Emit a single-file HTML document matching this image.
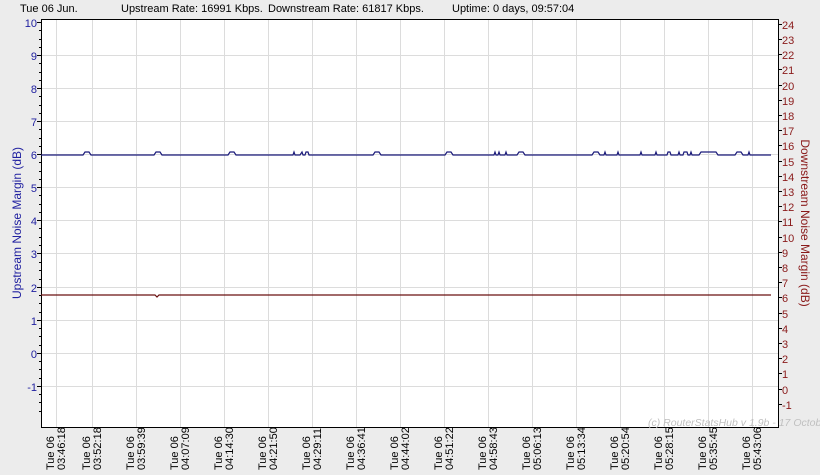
<!DOCTYPE html><html><head><style>body{margin:0;background:#ececec;}svg{display:block}text{font-family:"Liberation Sans",sans-serif;}</style></head><body>
<svg width="820" height="475" xmlns="http://www.w3.org/2000/svg">
<rect width="820" height="475" fill="#ececec"/>
<g font-size="11" fill="#000">
<text x="20" y="12">Tue 06 Jun.</text>
<text x="121" y="12">Upstream Rate: 16991 Kbps.</text>
<text x="268" y="12">Downstream Rate: 61817 Kbps.</text>
<text x="452" y="12">Uptime: 0 days, 09:57:04</text>
</g>
<rect x="41" y="19" width="737" height="408" fill="#fff"/>
<g stroke="#dcdcdc" stroke-width="1">
<path d="M56.5 19V427M92.5 19V427M136.5 19V427M180.5 19V427M224.5 19V427M268.5 19V427M312.5 19V427M356.5 19V427M400.5 19V427M444.5 19V427M488.5 19V427M532.5 19V427M576.5 19V427M620.5 19V427M664.5 19V427M708.5 19V427M752.5 19V427"/>
<path d="M41 55.5H778M41 88.5H778M41 121.5H778M41 154.5H778M41 187.5H778M41 220.5H778M41 253.5H778M41 287.5H778M41 320.5H778M41 353.5H778M41 386.5H778"/>
</g>
<path d="M41.5 19V427.5H778.5V19.5H41" fill="none" stroke="#000" stroke-width="1"/>
<g stroke="#000">
<path d="M37 22.5H41M37 55.5H41M37 88.5H41M37 121.5H41M37 154.5H41M37 187.5H41M37 220.5H41M37 253.5H41M37 287.5H41M37 320.5H41M37 353.5H41M37 386.5H41"/>
<path d="M39 30.5H41M39 39.5H41M39 47.5H41M39 63.5H41M39 72.5H41M39 80.5H41M39 96.5H41M39 105.5H41M39 113.5H41M39 129.5H41M39 138.5H41M39 146.5H41M39 162.5H41M39 171.5H41M39 179.5H41M39 195.5H41M39 204.5H41M39 212.5H41M39 228.5H41M39 237.5H41M39 245.5H41M39 262.5H41M39 270.5H41M39 279.5H41M39 295.5H41M39 303.5H41M39 312.5H41M39 328.5H41M39 336.5H41M39 345.5H41M39 361.5H41M39 369.5H41M39 378.5H41M39 394.5H41M39 402.5H41M39 411.5H41"/>
<path d="M778 24.5H782M778 39.5H782M778 54.5H782M778 69.5H782M778 85.5H782M778 100.5H782M778 115.5H782M778 130.5H782M778 145.5H782M778 161.5H782M778 176.5H782M778 191.5H782M778 206.5H782M778 221.5H782M778 237.5H782M778 252.5H782M778 267.5H782M778 282.5H782M778 297.5H782M778 313.5H782M778 328.5H782M778 343.5H782M778 358.5H782M778 373.5H782M778 389.5H782M778 404.5H782"/>
</g>
<g font-size="11" fill="#2020a0" text-anchor="end">
<text x="37" y="27">10</text><text x="37" y="60">9</text><text x="37" y="93">8</text><text x="37" y="126">7</text><text x="37" y="159">6</text><text x="37" y="192">5</text><text x="37" y="225">4</text><text x="37" y="258">3</text><text x="37" y="292">2</text><text x="37" y="325">1</text><text x="37" y="358">0</text><text x="37" y="391">-1</text>
</g>
<g font-size="11" fill="#8a1a1a">
<text x="782" y="29">24</text><text x="782" y="44">23</text><text x="782" y="59">22</text><text x="782" y="74">21</text><text x="782" y="90">20</text><text x="782" y="105">19</text><text x="782" y="120">18</text><text x="782" y="135">17</text><text x="782" y="150">16</text><text x="782" y="166">15</text><text x="782" y="181">14</text><text x="782" y="196">13</text><text x="782" y="211">12</text><text x="782" y="226">11</text><text x="782" y="242">10</text><text x="782" y="257">9</text><text x="782" y="272">8</text><text x="782" y="287">7</text><text x="782" y="302">6</text><text x="782" y="318">5</text><text x="782" y="333">4</text><text x="782" y="348">3</text><text x="782" y="363">2</text><text x="782" y="378">1</text><text x="782" y="394">0</text><text x="782" y="409">-1</text>
</g>
<text transform="translate(21,223) rotate(-90)" font-size="12" fill="#2020a0" text-anchor="middle">Upstream Noise Margin (dB)</text>
<text transform="translate(801,223) rotate(90)" font-size="12" fill="#8a1a1a" text-anchor="middle">Downstream Noise Margin (dB)</text>
<text x="648" y="426" font-size="10.5" font-style="italic" fill="#c0c0c0">(c) RouterStatsHub v 1.9b - 17 October 2</text>
<path d="M41 155H83L85 152H89L91 155H154L156 152H160L162 155H228L230 152H234L236 155H293L294 152L295 155H300L302 152L303 155H305L306 152H308L309 155H373L375 152H379L381 155H445L447 152H451L453 155H494L495 152L496 155H498L499 152L500 155H505L506 152L507 155H517L519 152H523L525 155H592L594 152H598L600 155H604L605 152L606 155H617L618 152L619 155H640L641 152L642 155H655L656 152L657 155H667L668 152H670L671 155H678L679 152L680 155H683L684 152H687L688 155H690L691 152L692 155H699L701 152H716L718 155H735L737 152H741L743 155H748L749 152L750 155H771" fill="none" stroke="#1a1a7a" stroke-width="1.2"/>
<path d="M41 295H155L157 297L159 295H771" fill="none" stroke="#6a1010" stroke-width="1.2"/>
<g font-size="11" fill="#000">
<g transform="translate(55,432) rotate(-90)"><text x="-38" y="-1">Tue 06</text><text x="-38" y="10">03:46:18</text></g>
<g transform="translate(91,432) rotate(-90)"><text x="-38" y="-1">Tue 06</text><text x="-38" y="10">03:52:18</text></g>
<g transform="translate(135,432) rotate(-90)"><text x="-38" y="-1">Tue 06</text><text x="-38" y="10">03:59:39</text></g>
<g transform="translate(179,432) rotate(-90)"><text x="-38" y="-1">Tue 06</text><text x="-38" y="10">04:07:09</text></g>
<g transform="translate(223,432) rotate(-90)"><text x="-38" y="-1">Tue 06</text><text x="-38" y="10">04:14:30</text></g>
<g transform="translate(267,432) rotate(-90)"><text x="-38" y="-1">Tue 06</text><text x="-38" y="10">04:21:50</text></g>
<g transform="translate(311,432) rotate(-90)"><text x="-38" y="-1">Tue 06</text><text x="-38" y="10">04:29:11</text></g>
<g transform="translate(355,432) rotate(-90)"><text x="-38" y="-1">Tue 06</text><text x="-38" y="10">04:36:41</text></g>
<g transform="translate(399,432) rotate(-90)"><text x="-38" y="-1">Tue 06</text><text x="-38" y="10">04:44:02</text></g>
<g transform="translate(443,432) rotate(-90)"><text x="-38" y="-1">Tue 06</text><text x="-38" y="10">04:51:22</text></g>
<g transform="translate(487,432) rotate(-90)"><text x="-38" y="-1">Tue 06</text><text x="-38" y="10">04:58:43</text></g>
<g transform="translate(531,432) rotate(-90)"><text x="-38" y="-1">Tue 06</text><text x="-38" y="10">05:06:13</text></g>
<g transform="translate(575,432) rotate(-90)"><text x="-38" y="-1">Tue 06</text><text x="-38" y="10">05:13:34</text></g>
<g transform="translate(619,432) rotate(-90)"><text x="-38" y="-1">Tue 06</text><text x="-38" y="10">05:20:54</text></g>
<g transform="translate(663,432) rotate(-90)"><text x="-38" y="-1">Tue 06</text><text x="-38" y="10">05:28:15</text></g>
<g transform="translate(707,432) rotate(-90)"><text x="-38" y="-1">Tue 06</text><text x="-38" y="10">05:35:45</text></g>
<g transform="translate(751,432) rotate(-90)"><text x="-38" y="-1">Tue 06</text><text x="-38" y="10">05:43:06</text></g>
</g>
</svg>
</body></html>
